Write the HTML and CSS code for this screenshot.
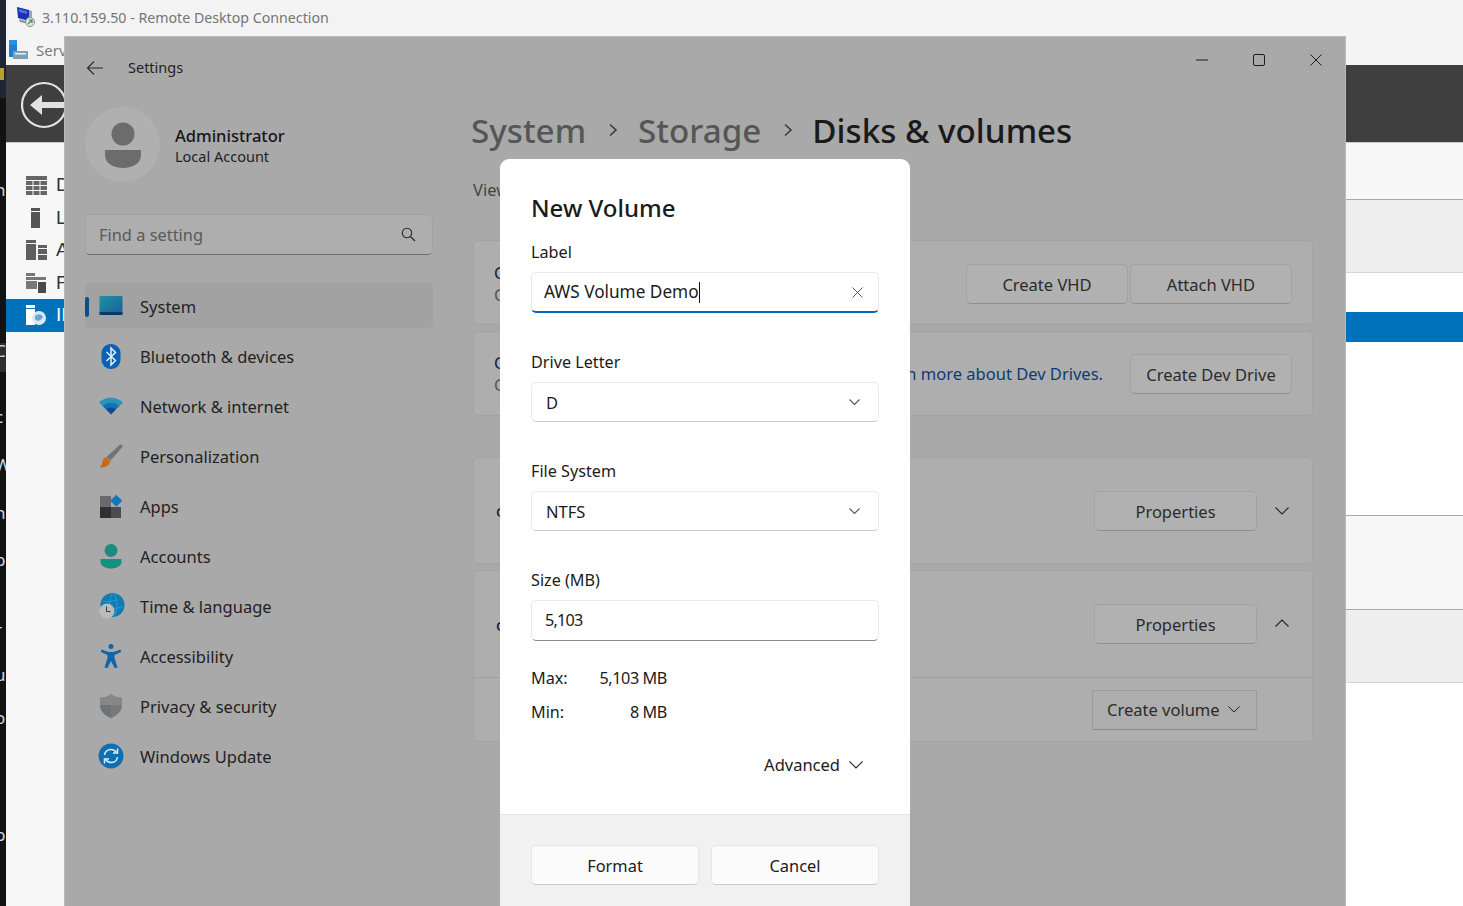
FILE: index.html

```html
<!doctype html>
<html lang="en">
<head>
  <meta charset="utf-8">
  <title>Remote Desktop Connection</title>
  <link rel="stylesheet" href="styles.css">
</head>
<body>
<div class="desktop">

  <!-- dark strip of whatever is behind the rdp window -->
  <div class="strip">
    <span>n</span><span>l</span><span>C</span><span>c</span><span>W</span><span>n</span><span>p</span><span>r</span><span>u</span><span>o</span><span>p</span>
  </div>

  <div class="rdp">
    <div class="rdp-title">
      <svg class="rdp-icon" width="20" height="22" viewBox="0 0 20 22">
        <path d="M1 1l12 3v11L2 12z" fill="#1c2fb5"/>
        <path d="M3 3l8 2v3L3 6z" fill="#3f74e8"/>
        <path d="M13 4l3 1v10l-3 0z" fill="#9aa3b5"/>
        <path d="M3 13l10 3v2L4 16z" fill="#8b93a3"/>
        <circle cx="14" cy="16" r="4.500" fill="#dfe3e6" stroke="#8a8f95"/>
        <path d="M12 18l4-4m-3 0h3v3" fill="none" stroke="#3b9b3b" stroke-width="1.200"/>
      </svg>
      <span>3.110.159.50 - Remote Desktop Connection</span>
    </div>
    <div class="sm-title">
      <svg width="20" height="20" viewBox="0 0 20 20">
        <rect x="0" y="0" width="8" height="5" fill="#2b8fe0"/>
        <rect x="0" y="5" width="8" height="12" fill="#1f7fd6"/>
        <rect x="4" y="11" width="15" height="8" fill="#7f9fb5"/>
        <rect x="6" y="13" width="11" height="1.500" fill="#e8eef2"/>
      </svg>
      <span>Server Manager</span>
    </div>
    <div class="sm-head">
      <div class="sm-dot"></div>
      <svg class="sm-back" width="48" height="48" viewBox="0 0 48 48">
        <circle cx="23" cy="24" r="22" fill="none" stroke="#e2e2e2" stroke-width="2.200"/>
        <path d="M9 24l12-10v7h22v6H21v7z" fill="#e2e2e2"/>
      </svg>
    </div>
    <div class="sm-body">
      <div class="sm-side">
        <div class="sm-item">
          <svg width="21" height="19" viewBox="0 0 21 19"><path d="M0 0h21v4H0zM0 5h6.500v4H0zM7.500 5h6v4h-6zM14.500 5H21v4h-6.500zM0 10h6.500v4H0zM7.500 10h6v4h-6zM14.500 10H21v4h-6.500zM0 15h6.500v4H0zM7.500 15h6v4h-6zM14.500 15H21v4h-6.500z" fill="#666"/></svg>
          <span>D</span>
        </div>
        <div class="sm-item">
          <svg width="21" height="20" viewBox="0 0 21 20"><path d="M5 0h9v3H5zM5 4h9v16H5z" fill="#555"/></svg>
          <span>L</span>
        </div>
        <div class="sm-item">
          <svg width="21" height="20" viewBox="0 0 21 20"><path d="M0 0h10v3H0zM0 4h10v16H0zM12 5h9v3h-9zM12 9h9v5h-9zM12 15h9v5h-9z" fill="#5f5f5f"/></svg>
          <span>A</span>
        </div>
        <div class="sm-item">
          <svg width="21" height="20" viewBox="0 0 21 20"><path d="M0 0h9v3H0zM0 4h20v3H0zM0 8h11v8H0z" fill="#777"/><path d="M12 9h8v11h-8z" fill="#4a4a4a"/></svg>
          <span>F</span>
        </div>
        <div class="sm-item sm-active">
          <svg width="21" height="20" viewBox="0 0 21 20"><path d="M0 0h9v3H0zM0 4h9v16H0z" fill="#fff"/><circle cx="13" cy="13" r="7" fill="#dce9f5"/><path d="M9 11c3-3 7-2 8 1-2 4-6 5-8 2z" fill="#6aa5d8"/></svg>
          <span>II</span>
        </div>
      </div>
      <div class="sm-rows">
        <div class="row row-a"></div>
        <div class="row row-b"></div>
        <div class="row row-c"></div>
        <div class="row row-sel"></div>
        <div class="row row-d"></div>
        <div class="row row-e"></div>
        <div class="row row-f"></div>
        <div class="row row-g"></div>
      </div>
    </div>
  </div>

  <!-- settings window, dimmed by the dialog -->
  <div class="settings">
    <div class="win-bar">
      <svg class="back" width="18" height="16" viewBox="0 0 18 16"><path d="M17 8H2M8 1.500L1.500 8 8 14.500" fill="none" stroke="#2b2b2b" stroke-width="1.100"/></svg>
      <span class="win-name">Settings</span>
      <div class="win-ctrls">
        <div class="ctrl"><svg width="14" height="14" viewBox="0 0 14 14"><path d="M1 7h12" stroke="#1d1d1d" stroke-width="1"/></svg></div>
        <div class="ctrl"><svg width="14" height="14" viewBox="0 0 14 14"><rect x="1.500" y="1.500" width="11" height="11" rx="1.500" fill="none" stroke="#1d1d1d" stroke-width="1"/></svg></div>
        <div class="ctrl"><svg width="14" height="14" viewBox="0 0 14 14"><path d="M1.500 1.500l11 11M12.500 1.500l-11 11" stroke="#1d1d1d" stroke-width="1"/></svg></div>
      </div>
    </div>

    <div class="win-body">
      <aside class="sidebar">
        <div class="profile">
          <div class="avatar">
            <svg width="36" height="46" viewBox="0 0 36 46"><circle cx="18" cy="12" r="11.500" fill="#6c6c6c"/><path d="M0 28h36v5c0 8-8 13-18 13S0 41 0 33z" fill="#6c6c6c"/></svg>
          </div>
          <div>
            <div class="who">Administrator</div>
            <div class="who-sub">Local Account</div>
          </div>
        </div>

        <div class="search">
          <span>Find a setting</span>
          <svg width="15" height="15" viewBox="0 0 15 15"><circle cx="6" cy="6" r="4.700" fill="none" stroke="#2b2b2b" stroke-width="1.100"/><path d="M9.500 9.500l4.500 4.500" stroke="#2b2b2b" stroke-width="1.200"/></svg>
        </div>

        <nav class="nav">
          <a class="nav-item selected">
            <svg class="nav-icon" viewBox="0 0 24 24"><defs><linearGradient id="sys" x1="0" y1="0" x2="1" y2="1"><stop offset="0" stop-color="#1f93a3"/><stop offset="1" stop-color="#175f9c"/></linearGradient></defs><rect x="0.500" y="2" width="23" height="19" rx="1" fill="url(#sys)"/><path d="M.5 18h23v2a1 1 0 0 1-1 1h-21a1 1 0 0 1-1-1z" fill="#0d3a5e"/></svg>
            <span>System</span>
          </a>
          <a class="nav-item">
            <svg class="nav-icon" viewBox="0 0 24 24"><rect x="2.500" y="0" width="19" height="25" rx="9" fill="#0b62b5"/><path d="M7.500 8l9 8.500-4.500 4.500V4l4.500 4.500-9 8.500" fill="none" stroke="#e6eef6" stroke-width="1.500"/></svg>
            <span>Bluetooth &amp; devices</span>
          </a>
          <a class="nav-item">
            <svg class="nav-icon" viewBox="0 0 24 24"><path d="M0 8.500C6 2 18 2 24 8.500l-3.500 3.500h-17z" fill="#2a93b8"/><path d="M3.500 12C8 7.500 16 7.500 20.500 12L17 15.500H7z" fill="#0f74b5"/><path d="M7 15.500c3-2.800 7-2.800 10 0L12 20.500z" fill="#0c4a8c"/></svg>
            <span>Network &amp; internet</span>
          </a>
          <a class="nav-item">
            <svg class="nav-icon" viewBox="0 0 24 24"><path d="M21 .5c2-.5 3 1 2.500 2.500L11.500 16.500l-4-3.500z" fill="#6f7478"/><path d="M7 13l4.500 4c-1 4.500-5.500 7-11 6.500 2.500-2 2.500-4 3-6 .5-2 1.500-3.800 3.500-4.500z" fill="#c76a16"/></svg>
            <span>Personalization</span>
          </a>
          <a class="nav-item">
            <svg class="nav-icon" viewBox="0 0 24 24"><rect x="1" y="2" width="11" height="11" fill="#6a6a6e"/><rect x="1" y="13" width="11" height="11" fill="#2f3033"/><rect x="12" y="13" width="10" height="11" fill="#4a4c4f"/><rect x="13" y="2.500" width="8.500" height="8.500" transform="rotate(45 17.250 6.750)" fill="#1277b8"/></svg>
            <span>Apps</span>
          </a>
          <a class="nav-item">
            <svg class="nav-icon" viewBox="0 0 24 24"><circle cx="12" cy="6.500" r="6.500" fill="#1c8a7f"/><path d="M1.500 15h21v3c0 4-5 6.500-10.500 6.500S1.500 22 1.500 18z" fill="#16917f"/></svg>
            <span>Accounts</span>
          </a>
          <a class="nav-item">
            <svg class="nav-icon" viewBox="0 0 24 24"><circle cx="13.500" cy="11" r="12" fill="#117bb5"/><path d="M4 7c4 1 8 1 13-1M3 14c4 1 12 1 20-1M13 0c-3 6-3 14 0 22M15 0c4 6 4 14 0 22" stroke="#2b9cc5" stroke-width="1" fill="none"/><circle cx="8" cy="17" r="7.500" fill="#b9bbbd"/><path d="M7.500 12.500V17.500H11.500" fill="none" stroke="#3a3a3a" stroke-width="1"/></svg>
            <span>Time &amp; language</span>
          </a>
          <a class="nav-item">
            <svg class="nav-icon" viewBox="0 0 24 24"><circle cx="12" cy="2.500" r="2.500" fill="#0f66ad"/><path d="M2.500 5.500l7 2.500h5l7-2.500.6 2.500-6.600 3v3l3 9.500-2.800.8L12 17l-3.700 7.300-2.800-.8 3-9.500v-3L1.900 8z" fill="#0f66ad"/></svg>
            <span>Accessibility</span>
          </a>
          <a class="nav-item">
            <svg class="nav-icon" viewBox="0 0 24 24"><path d="M12 0c3 2.500 7 3.500 11 3.500V11c0 6-4.500 10.500-11 13C5.500 21.500 1 17 1 11V3.500C5 3.500 9 2.500 12 0z" fill="#85888b"/><path d="M12 0v24C5.500 21.500 1 17 1 11h11z" fill="#6f7275"/><path d="M12 11h11c0 6-4.500 10.500-11 13z" fill="#77797c"/></svg>
            <span>Privacy &amp; security</span>
          </a>
          <a class="nav-item">
            <svg class="nav-icon" viewBox="0 0 24 24"><circle cx="12" cy="12" r="12.500" fill="#0f6fb2"/><path d="M5.500 11c.5-3.500 3.500-5.500 6.500-5.500 2.200 0 4 1 5.200 2.700M18.500 13c-.5 3.500-3.500 5.500-6.500 5.500-2.200 0-4-1-5.200-2.700" fill="none" stroke="#e4eef5" stroke-width="1.500"/><path d="M18.500 4.500v4.500H14M5.500 19.500V15H10" fill="none" stroke="#e4eef5" stroke-width="1.500"/></svg>
            <span>Windows Update</span>
          </a>
        </nav>
      </aside>

      <main class="main">
        <h1 class="crumbs">
          <span class="crumb">System</span>
          <svg class="sep" width="10" height="14" viewBox="0 0 10 14"><path d="M2 1.500L8 7l-6 5.500" fill="none" stroke="#3a3a3a" stroke-width="1.600"/></svg>
          <span class="crumb crumb-mid">Storage</span>
          <svg class="sep" width="10" height="14" viewBox="0 0 10 14"><path d="M2 1.500L8 7l-6 5.500" fill="none" stroke="#3a3a3a" stroke-width="1.600"/></svg>
          <span class="crumb-now">Disks &amp; volumes</span>
        </h1>
        <p class="lead">View disks and volumes</p>

        <section class="card card-short card-top">
          <div class="card-text">
            <div>Create a virtual hard disk</div>
            <small>Create a new VHD</small>
          </div>
          <div class="actions">
            <button class="btn">Create VHD</button>
            <button class="btn">Attach VHD</button>
          </div>
        </section>

        <section class="card card-short card-next">
          <div class="card-text">
            <div>Create a Dev Drive</div>
            <small>Create a new volume</small>
          </div>
          <div class="actions">
            <a class="link">Learn more about Dev Drives.</a>
            <button class="btn">Create Dev Drive</button>
          </div>
        </section>

        <section class="card card-disk card-first">
          <div class="disk-name">c</div>
          <div class="actions">
            <button class="btn btn-prop">Properties</button>
            <div class="toggle"><svg width="14" height="8" viewBox="0 0 14 8"><path d="M.5.5L7 7 13.500.5" fill="none" stroke="#222" stroke-width="1.100"/></svg></div>
          </div>
        </section>

        <section class="card card-open card-next">
          <div class="card-head">
            <div class="disk-name">c</div>
            <div class="actions">
              <button class="btn btn-prop">Properties</button>
              <div class="toggle toggle-up"><svg width="14" height="8" viewBox="0 0 14 8"><path d="M.5 7.500L7 1l6.500 6.500" fill="none" stroke="#222" stroke-width="1.100"/></svg></div>
            </div>
          </div>
          <div class="card-foot">
            <button class="btn btn-square">Create volume
              <svg width="12" height="7" viewBox="0 0 12 7"><path d="M.5.500L6 6 11.500.5" fill="none" stroke="#222" stroke-width="1"/></svg>
            </button>
          </div>
        </section>
      </main>
    </div>
  </div>

  <!-- New Volume dialog -->
  <div class="dialog">
    <div class="dialog-body">
      <h2>New Volume</h2>

      <div class="field field-first">
        <label>Label</label>
        <div class="input focused">
          <span class="value typed">AWS Volume Demo</span><span class="caret"></span>
          <svg class="clear" width="11" height="11" viewBox="0 0 11 11"><path d="M.5.5l10 10M10.500.5l-10 10" stroke="#555" stroke-width="1"/></svg>
        </div>
      </div>

      <div class="field">
        <label>Drive Letter</label>
        <div class="input select">
          <span>D</span>
          <svg width="11" height="6" viewBox="0 0 11 6"><path d="M.5.5L5.500 5.500 10.500.5" fill="none" stroke="#555" stroke-width="1.100"/></svg>
        </div>
      </div>

      <div class="field">
        <label>File System</label>
        <div class="input select">
          <span>NTFS</span>
          <svg width="11" height="6" viewBox="0 0 11 6"><path d="M.5.5L5.500 5.500 10.500.5" fill="none" stroke="#555" stroke-width="1.100"/></svg>
        </div>
      </div>

      <div class="field">
        <label>Size (MB)</label>
        <div class="input plain"><span class="value size">5,103</span></div>
      </div>

      <div class="limits">
        <span>Max:</span><span class="num">5,103 MB</span>
        <span>Min:</span><span class="num">8 MB</span>
      </div>

      <div class="advanced">
        <span>Advanced</span>
        <svg width="14" height="8" viewBox="0 0 14 8"><path d="M.5.5L7 7 13.500.5" fill="none" stroke="#222" stroke-width="1.100"/></svg>
      </div>
    </div>
    <div class="dialog-foot">
      <button class="dlg-btn">Format</button>
      <button class="dlg-btn">Cancel</button>
    </div>
  </div>

</div>
</body>
</html>
```

FILE: styles.css

```css
*{box-sizing:border-box;}
html,body{margin:0;padding:0;}
body{
  font-family:"Noto Sans","Open Sans",sans-serif;
  font-size:16.5px; color:#1b1b1b;
  width:1463px; height:906px; overflow:hidden; background:#111;
}
button{font-family:inherit;cursor:default;}
svg{flex:none;}
.desktop{position:relative;width:1463px;height:906px;overflow:hidden;display:flex;}

/* left strip */
.strip{
  width:6px; flex:none; height:906px; overflow:hidden;
  background:linear-gradient(#1d2637 98px,#121212 98px,#121212 343px,#2e2e2e 343px,#2e2e2e 372px,#121212 372px);
  color:#cfd8e2; font-size:17px; line-height:20px;
  display:flex; flex-direction:column;
}
.strip span{display:block;height:20px;margin-left:-5px;}
.strip span:nth-child(1){margin-top:180px;}
.strip span:nth-child(2){margin-top:28px;}
.strip span:nth-child(3){margin-top:93px;}
.strip span:nth-child(4){margin-top:46px;}
.strip span:nth-child(5){margin-top:28px;}
.strip span:nth-child(6){margin-top:28px;}
.strip span:nth-child(7){margin-top:27px;}
.strip span:nth-child(8){margin-top:50px;}
.strip span:nth-child(9){margin-top:25px;}
.strip span:nth-child(10){margin-top:23px;}
.strip span:nth-child(11){margin-top:97px;}

/* rdp window */
.rdp{flex:1;display:flex;flex-direction:column;height:906px;background:#f7f7f7;}
.rdp-title{
  height:36px; flex:none; background:#f3f3f3; color:#757575; font-size:14.200px;
  display:flex; align-items:center; padding:0 0 2px 10px; gap:6px;
}
.sm-title{
  height:29px; flex:none; background:#f4f4f4; color:#7a7a7a; font-size:15px;
  display:flex; align-items:center; padding:0 0 2px 3px; gap:7px;
}
.sm-head{
  height:78px; flex:none; background:#3f3f3f; border-bottom:1px solid #ccc;
  display:flex; align-items:center; padding:2px 0 0 15px;
}
.sm-dot{position:absolute;left:0;top:68px;width:4px;height:12px;background:#b5a32a;}
.sm-body{flex:1;display:flex;}
.sm-side{width:59px;flex:none;background:#f7f7f7;padding-top:26px;}
.sm-item{
  height:32.500px; display:flex; align-items:center; gap:9px; padding-left:20px;
  color:#333; font-family:"Liberation Sans",sans-serif; font-size:19px; white-space:nowrap; overflow:hidden;
}
.sm-active{background:#0072bc;color:#fff;}
.sm-rows{flex:1;background:#fff;}
.row{border-bottom:1px solid transparent;}
.row-a{height:57px;background:#f7f7f7;border-color:#a8a8a8;}
.row-b{height:73px;background:#eee;border-color:#d5d5d5;}
.row-c{height:39px;background:#fff;border-bottom:0;}
.row-sel{height:30px;background:#0072bc;border-bottom:0;}
.row-d{height:174px;background:#fff;border-color:#a8a8a8;}
.row-e{height:94px;background:#f7f7f7;border-color:#a8a8a8;}
.row-f{height:73px;background:#eee;border-color:#d5d5d5;}
.row-g{height:200px;background:#fff;border-bottom:0;}

/* settings window */
.settings{
  position:absolute; left:64px; top:36px; width:1282px; height:880px;
  background:#a9a9a9; border:1px solid #b9b9b9;
}
.win-bar{height:60px;display:flex;align-items:flex-start;padding:21px 0 0 21px;}
.back{margin-top:2px;}
.win-name{margin-left:24px;font-size:14.500px;line-height:19px;color:#222;}
.win-ctrls{margin:-8px 1px 0 auto;display:flex;}
.ctrl{width:57px;height:20px;display:flex;align-items:center;justify-content:center;}
.win-body{display:flex;}

.sidebar{width:408px;flex:none;padding:10px 0 0 20px;}
.profile{width:348px;height:75px;display:flex;align-items:center;gap:15px;}
.avatar{
  width:75px;height:75px;border-radius:50%;background:#b0b0b0;flex:none;
  display:flex;align-items:center;justify-content:center;
}
.who{font-size:16.500px;font-weight:500;line-height:22px;color:#161616;margin-top:2px;}
.who-sub{font-size:14.500px;line-height:20px;color:#222;margin-top:-1px;}
.search{
  width:348px;height:41px;margin-top:32px;padding:0 16px 0 13px;
  display:flex;align-items:center;justify-content:space-between;
  background:#aeaeae;border:1px solid #a2a2a2;border-bottom:1px solid #6e6e6e;border-radius:5px;
  color:#5a5a5a;font-size:16.400px;
}
.nav{width:348px;margin-top:28px;display:flex;flex-direction:column;gap:5px;}
.nav-item{
  position:relative;height:45px;border-radius:5px;padding-left:14px;
  display:flex;align-items:center;gap:17px;color:#222;font-size:16.500px;
}
.nav-item span{margin-top:2px;}
.nav-item.selected{background:#a2a2a2;}
.nav-item.selected::before{
  content:""; position:absolute; left:0; top:14px; width:4px; height:20px;
  border-radius:2px; background:#0b4f8a;
}
.nav-icon{width:24px;height:24px;flex:none;overflow:visible;}

.main{width:840px;flex:none;}
.crumbs{
  margin:9px 0 0 -2px;height:48px;display:flex;align-items:center;gap:22px;
  font-size:33.200px;font-weight:500;color:#1a1a1a;white-space:nowrap;
}
.crumb{color:#565656;}
.crumb-mid{margin-left:-2px;}
.crumb-now{margin-left:-3px;}
.lead{margin:24px 0 0;height:24px;line-height:24px;font-size:16.500px;color:#444;}
.card{
  background:#aeaeae;border:1px solid #a3a3a3;border-radius:5px;
}
.card-short{
  margin-top:38px;height:85px;padding:0 20px;
  display:flex;align-items:center;justify-content:space-between;
}
.card-top{padding-top:3px;}
.card-top .btn{padding-top:0;}
.card-next{margin-top:6px;}
.card-first{margin-top:41px;}
.card-text{font-size:16.500px;line-height:22px;color:#1d1d1d;}
.card-text small{display:block;font-size:16.500px;color:#555;}
.actions{display:flex;align-items:center;gap:2px;}
.btn{
  width:162px;height:40px;background:#b1b1b1;color:#2b2b2b;font-size:16.500px;
  border:1px solid #a2a2a2;border-bottom-color:#8e8e8e;border-radius:5px;
  padding:2px 0 0;
}
.btn-prop{width:163px;margin-right:-2px;}
.link{color:#0d3a75;font-size:16.500px;margin-right:25px;white-space:nowrap;}
.card-disk{height:107px;padding:0 5px 0 20px;display:flex;align-items:center;justify-content:space-between;}
.card-head{height:107px;padding:0 5px 0 20px;display:flex;align-items:center;justify-content:space-between;border-bottom:1px solid #a1a1a1;}
.card-head .btn{padding-top:1px;}
.disk-name{font-size:17px;color:#111;margin-left:2px;}
.toggle{width:50px;height:40px;display:flex;align-items:center;justify-content:center;}
.toggle-up{padding-bottom:3px;}
.card-foot{height:63px;padding-right:55px;display:flex;align-items:center;justify-content:flex-end;}
.btn-square{
  width:165px;border-radius:0;display:flex;align-items:center;gap:8px;padding:0 0 0 14px;
  background:#adadad;border-color:#9b9b9b;border-bottom-color:#888;
}

/* dialog */
.dialog{
  position:absolute;left:500px;top:159px;width:410px;height:760px;
  background:#fff;border-radius:9px 9px 0 0;overflow:hidden;
  display:flex;flex-direction:column;
}
.dialog-body{height:655px;flex:none;padding:32px 31px 0 31px;}
.dialog h2{margin:0;font-size:24px;font-weight:500;line-height:34px;color:#1b1b1b;}
.field{margin-top:37px;}
.field-first{margin-top:15px;}
.field label{display:block;height:24px;line-height:24px;font-size:16.200px;color:#1b1b1b;margin-bottom:8px;}
.input{
  width:348px;height:40px;background:#fff;border:1px solid #e9e9e9;border-bottom-color:#c9c9c9;border-radius:5px;
  display:flex;align-items:center;font-size:16.500px;color:#1b1b1b;
}
.input .value{white-space:nowrap;}
.typed{font-size:17.200px;margin-top:-2px;}
.size{font-size:16.200px;letter-spacing:-.8px;margin-top:-2px;}
.focused{height:41px;padding-left:12px;border-bottom:2.500px solid #0067c0;position:relative;}
.caret{width:1px;height:21px;background:#111;}
.clear{position:absolute;right:15px;top:14px;}
.select{padding:0 18px 0 14px;justify-content:space-between;}
.plain{height:41px;padding-left:13px;border-bottom-color:#8a8a8a;}
.limits{
  margin-top:25px;display:grid;grid-template-columns:68px 68px;
  row-gap:10px;font-size:16.200px;line-height:24px;
}
.num{text-align:right;white-space:nowrap;letter-spacing:-.4px;}
.advanced{
  margin-top:29px;display:flex;align-items:center;justify-content:flex-end;gap:9px;padding-right:16px;
  font-size:16.500px;
}
.dialog-foot{
  flex:1;background:#f1f1f1;border-top:1px solid #e4e4e4;padding:30px 31px 0 31px;
  display:flex;gap:12px;align-items:flex-start;
}
.dlg-btn{
  width:168px;height:40px;background:#fbfbfb;color:#1b1b1b;font-size:16.400px;padding:0;
  border:1px solid #e6e6e6;border-bottom-color:#c9c9c9;border-radius:5px;
}
```
